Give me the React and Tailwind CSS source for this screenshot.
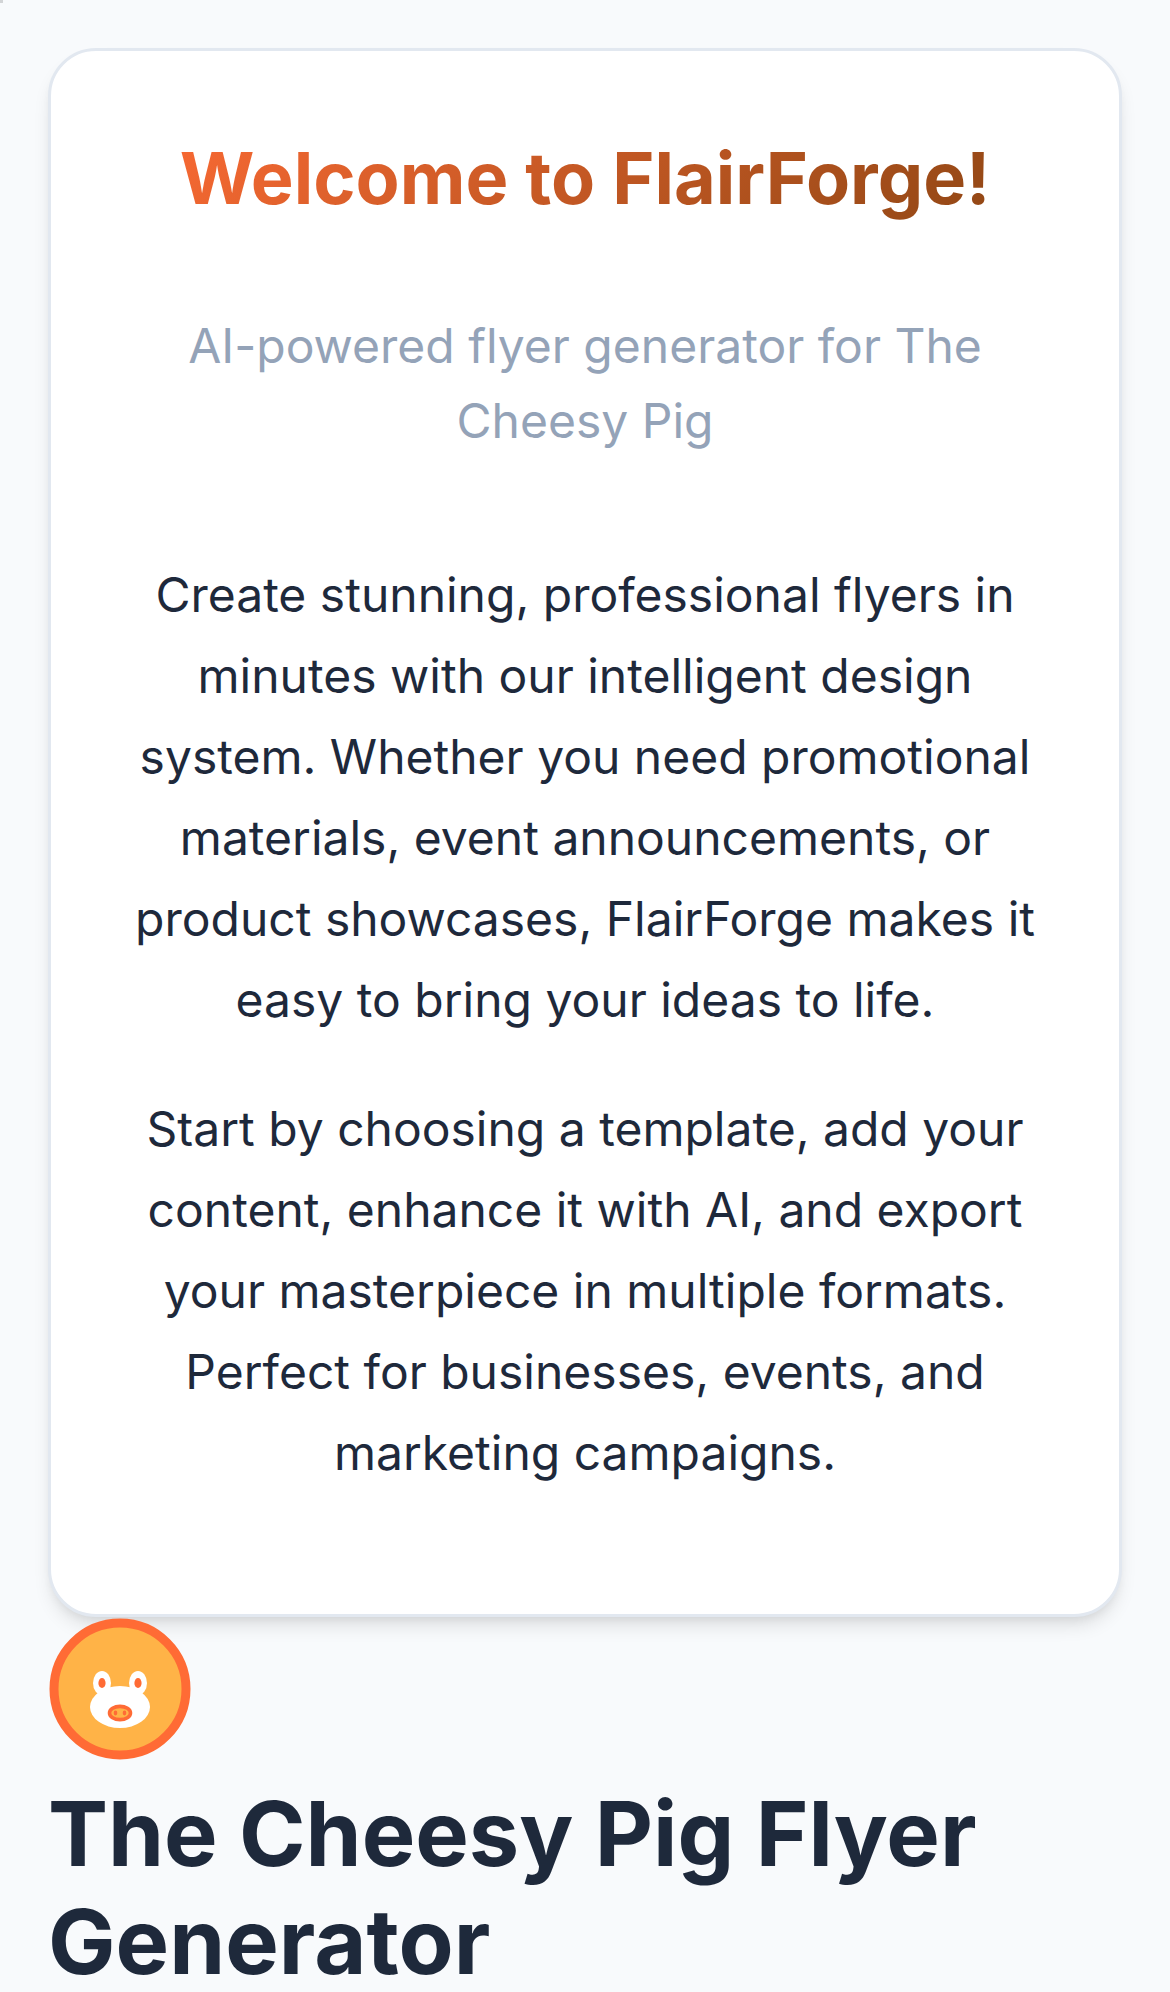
export default function App() {
  return (
    <main className="relative h-[1992px] overflow-hidden bg-[#f8fafc] px-[48px] pt-[48px] font-['Inter',sans-serif] text-[#1e293b]">
      <span className="absolute top-0 left-0 size-[3px] bg-[#d2d4d6]" />
      <section className="h-[1569px] rounded-[48px] border-[3px] border-[#e2e8f0] bg-white px-[72px] pt-[72px] text-center shadow-[0_12px_18px_-3px_rgba(0,0,0,0.1),0_6px_12px_-6px_rgba(0,0,0,0.1)]">
        <h1 className="bg-linear-135 from-[#ff6b35] to-[#8b4513] bg-clip-text text-[72px] leading-[109px] font-bold text-transparent">Welcome to FlairForge!</h1>
        <p className="mt-[76px] text-[48px] leading-[75px] text-[#94a3b8]">AI-powered flyer generator for The<br />Cheesy Pig</p>
        <div className="mt-[96px] text-[48px] leading-[81px]">
          <p>Create stunning, professional flyers in<br />minutes with our intelligent design<br />system. Whether you need promotional<br />materials, event announcements, or<br />product showcases, FlairForge makes it<br />easy to bring your ideas to life.</p>
          <p className="mt-[48px]">Start by choosing a template, add your<br />content, enhance it with AI, and export<br />your masterpiece in multiple formats.<br />Perfect for businesses, events, and<br />marketing campaigns.</p>
        </div>
      </section>
      <svg className="block h-[144px] w-[144px]" viewBox="0 0 48 48">
        <circle cx="24" cy="24" r="22" fill="#ffb347" stroke="#ff6b35" strokeWidth="3" />
        <g fill="#fff">
          <ellipse cx="24" cy="30" rx="10" ry="7" />
          <ellipse cx="18" cy="22" rx="3" ry="4" />
          <ellipse cx="30" cy="22" rx="3" ry="4" />
        </g>
        <g fill="#ff6b35">
          <ellipse cx="18" cy="22" rx="1.2" ry="1.7" />
          <ellipse cx="30" cy="22" rx="1.2" ry="1.7" />
        </g>
        <ellipse cx="24" cy="32" rx="3.5" ry="2.2" fill="#ffb347" stroke="#ff6b35" strokeWidth="1.2" />
        <g fill="#ff6b35">
          <ellipse cx="22.5" cy="32" rx="0.6" ry="0.8" />
          <ellipse cx="25.5" cy="32" rx="0.6" ry="0.8" />
        </g>
      </svg>
      <h2 className="mt-[19px] text-[90px] leading-[108px] font-bold">The Cheesy Pig Flyer<br />Generator</h2>
    </main>
  );
}
